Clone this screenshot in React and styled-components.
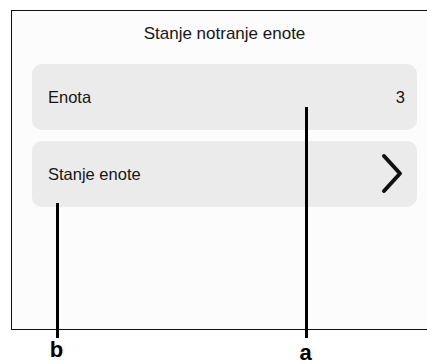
import React from "react";
import styled, { createGlobalStyle } from "styled-components";

const GlobalStyle = createGlobalStyle`
  html, body {
    margin: 0;
    padding: 0;
    overflow: hidden;
    background: #ffffff;
  }
  body {
    font-family: "Liberation Sans", Arial, sans-serif;
    color: #111111;
  }
`;

const Figure = styled.div`
  position: relative;
  width: 427px;
  height: 364px;
  overflow: hidden;
  padding: 10px 0 0 11px;
  box-sizing: border-box;
`;

const Screen = styled.div`
  width: 426px;
  height: 320px;
  box-sizing: border-box;
  border-style: solid;
  border-color: #111111;
  border-width: 1px 0 1px 1px;
  background: #fcfcfc;
  padding: 0 0 0 20px;
`;

const Column = styled.div`
  width: 385px;
  display: flex;
  flex-direction: column;
`;

const Title = styled.div`
  margin-top: 13px;
  margin-bottom: 20px;
  line-height: 20px;
  font-size: 17px;
  text-align: center;
  color: #161616;
`;

const List = styled.div`
  display: flex;
  flex-direction: column;
  gap: 11px;
`;

const Row = styled.div`
  height: 66px;
  border-radius: 10px;
  background: #ebebeb;
  display: flex;
  align-items: center;
  justify-content: space-between;
  padding: 0 14px 0 16px;
  font-size: 16.5px;
  color: #161616;
`;

const Value = styled.span`
  font-size: 16.5px;
  margin-right: -2px;
`;

const Chevron = styled.svg`
  display: block;
  width: 22px;
  height: 42px;
`;

const Leader = styled.div`
  position: absolute;
  left: ${(p) => p.$x}px;
  top: ${(p) => p.$top}px;
  height: ${(p) => p.$bottom - p.$top}px;
  width: 3px;
  background: #000000;
`;

const Label = styled.div`
  position: absolute;
  left: ${(p) => p.$cx - 10}px;
  top: ${(p) => p.$top}px;
  width: 20px;
  text-align: center;
  font-size: 22px;
  line-height: 22px;
  font-weight: bold;
  color: #000000;
`;

export default function App() {
  return (
    <>
      <GlobalStyle />
      <Figure>
        <Screen>
          <Column>
            <Title>Stanje notranje enote</Title>
            <List>
              <Row>
                <span>Enota</span>
                <Value>3</Value>
              </Row>
              <Row>
                <span>Stanje enote</span>
                <Chevron viewBox="0 0 22 42">
                  <polyline
                    points="3,3 19,20.5 3,38"
                    fill="none"
                    stroke="#111111"
                    strokeWidth="4"
                    strokeLinecap="round"
                    strokeLinejoin="round"
                  />
                </Chevron>
              </Row>
            </List>
          </Column>
        </Screen>
        <Leader $x={305} $top={107} $bottom={338} />
        <Leader $x={56} $top={203} $bottom={338} />
        <Label $cx={56.5} $top={339}>b</Label>
        <Label $cx={305.5} $top={342}>a</Label>
      </Figure>
    </>
  );
}
